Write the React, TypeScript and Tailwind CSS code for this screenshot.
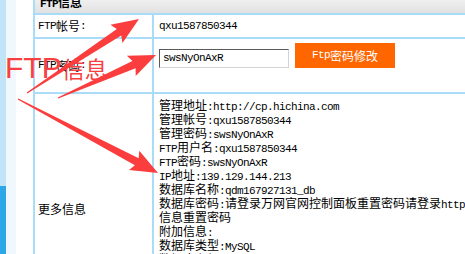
import React from 'react'

// splits a string into latin / CJK runs so each gets its own font
function T({ s }: { s: string }) {
  const parts = s.match(/[\x00-\x7f]+|[^\x00-\x7f]+/g) ?? []
  return (
    <>
      {parts.map((p, i) =>
        /^[\x00-\x7f]/.test(p) ? (
          <span key={i} className="font-['Liberation_Mono',monospace] text-[11px] tracking-[-0.6px]">
            {p}
          </span>
        ) : (
          <span key={i} className="font-['Noto_Sans_CJK_SC',sans-serif] text-[12px]">
            {p}
          </span>
        )
      )}
    </>
  )
}

const moreInfo = [
  '管理地址:http://cp.hichina.com',
  '管理帐号:qxu1587850344',
  '管理密码:swsNyOnAxR',
  'FTP用户名:qxu1587850344',
  'FTP密码:swsNyOnAxR',
  'IP地址:139.129.144.213',
  '数据库名称:qdm167927131_db',
  '数据库密码:请登录万网官网控制面板重置密码请登录http://cp.hichina.com的数据库',
  '信息重置密码',
  '附加信息:',
  '数据库类型:MySQL',
  '数据库主机:qdm167927131.my3w.com',
  '数据库用户名:qdm167927131',
  '数据库端口:3306',
  '备注:',
  '',
]

// tapered annotation arrow
function arrowPoints(x1: number, y1: number, x2: number, y2: number) {
  const dx = x2 - x1
  const dy = y2 - y1
  const len = Math.hypot(dx, dy)
  const ux = dx / len
  const uy = dy / len
  const nx = -uy
  const ny = ux
  const head = 24
  const hw = 11
  const sw = 4
  const tw = 0.6
  const bx = x2 - ux * head
  const by = y2 - uy * head
  const pts = [
    [x1 + nx * tw, y1 + ny * tw],
    [bx + nx * sw, by + ny * sw],
    [bx + nx * hw - ux * 3, by + ny * hw - uy * 3],
    [x2, y2],
    [bx - nx * hw - ux * 3, by - ny * hw - uy * 3],
    [bx - nx * sw, by - ny * sw],
    [x1 - nx * tw, y1 - ny * tw],
  ]
  return pts.map((p) => p[0].toFixed(1) + ',' + p[1].toFixed(1)).join(' ')
}

const arrows = [
  [27, 93, 139, 19],
  [58, 98, 156, 55],
  [18, 99, 158, 173],
]

export default function App() {
  return (
    <div className="relative flex items-start w-[465px] h-[254px] overflow-hidden bg-white text-black">
      {/* left strip */}
      <div className="flex flex-col self-stretch w-[6px] shrink-0">
        <div className="h-[186px] bg-[#c2e4f8]" />
        <div className="flex-1 bg-[#2ca7e7]" />
      </div>
      <div className="self-stretch w-[10px] shrink-0 bg-[#f0f8fe]" />
      <div className="w-[17px] shrink-0" />

      {/* FTP table */}
      <div className="flex flex-col w-[600px] shrink-0 -mt-[10px] border-l-2 border-[#abdcf7]">
        <div className="shrink-0 h-[25px] pt-[4px] pl-[5px] bg-linear-to-b from-[#fbfbfb] to-[#e1e1e1] border-b-2 border-[#abdcf7] font-bold leading-[14px]">
          <T s="FTP信息" />
        </div>

        <div className="flex shrink-0 h-[24px] border-b-2 border-[#abdcf7]">
          <div className="flex items-center w-[119px] pl-[3px] border-r-2 border-[#abdcf7]">
            <T s="FTP帐号:" />
          </div>
          <div className="flex items-center pl-[5px]">
            <T s="qxu1587850344" />
          </div>
        </div>

        <div className="flex shrink-0 h-[55px] border-b-2 border-[#abdcf7]">
          <div className="flex items-center w-[119px] pl-[3px] border-r-2 border-[#abdcf7]">
            <T s="FTP密码:" />
          </div>
          <div className="flex items-end gap-[6px] pl-[5px] pt-[4px] h-[29px]">
            <div className="flex items-center w-[130px] h-[19px] pl-[3px] border border-t-[#5a5a5a] border-l-[#5a5a5a] border-b-[#d4d4d4] border-r-[#d4d4d4]">
              <T s="swsNyOnAxR" />
            </div>
            <button className="flex items-center justify-center w-[100px] h-[25px] bg-[#ff6600] text-white">
              <T s="Ftp密码修改" />
            </button>
          </div>
        </div>

        <div className="flex shrink-0">
          <div className="flex items-center w-[119px] pl-[3px] border-r-2 border-[#abdcf7]">
            <T s="更多信息" />
          </div>
          <div className="flex flex-col py-[3px] pl-[5px] leading-[14px]">
            {moreInfo.map((line, i) => (
              <div key={i} className="h-[14px] whitespace-nowrap">
                <T s={line} />
              </div>
            ))}
          </div>
        </div>
      </div>

      {/* annotation overlay */}
      <div className="absolute left-[5px] top-[48px] flex items-baseline text-[#f7403f] pointer-events-none">
        <span className="font-['Liberation_Sans',sans-serif] text-[30px] leading-[40px]">FTP</span>
        <span className="font-['Noto_Sans_CJK_SC',sans-serif] text-[23px] leading-[40px]">信息</span>
      </div>
      <svg className="absolute inset-0 pointer-events-none" width="465" height="254">
        {arrows.map((a, i) => (
          <polygon key={i} points={arrowPoints(a[0], a[1], a[2], a[3])} fill="#fb3d3d" />
        ))}
      </svg>
    </div>
  )
}
